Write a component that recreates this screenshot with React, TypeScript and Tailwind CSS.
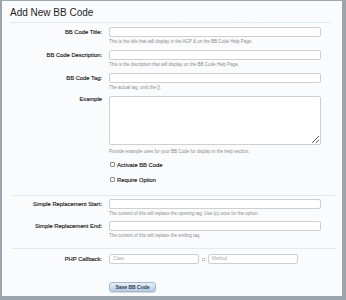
import React from 'react';

type RowProps = {
  label: string;
  hint?: string;
  labelClass?: string;
  children: React.ReactNode;
  className?: string;
};

function Row({ label, hint, labelClass, children, className }: RowProps) {
  return (
    <div className={`flex items-start ${className ?? ''}`}>
      <label
        className={`w-[100px] shrink-0 text-right text-[5.8px] text-[#1a1a1a] [-webkit-text-stroke:0.15px_#1a1a1a] ${
          labelClass ?? 'h-[10px] leading-[10px]'
        }`}
      >
        {label}
      </label>
      <div className="ml-[7px] flex w-[212px] flex-col">
        {children}
        {hint && (
          <p className="mt-[2px] whitespace-nowrap text-[4.5px] leading-[6px] text-[#8c8c8c]">{hint}</p>
        )}
      </div>
    </div>
  );
}

function TextInput({ placeholder, className }: { placeholder?: string; className?: string }) {
  return (
    <input
      type="text"
      placeholder={placeholder}
      className={`h-[10px] rounded-[2px] border border-[#cfcfcf] bg-white px-[3px] text-[4.5px] text-[#333] outline-none placeholder:text-[#a8a8a8] ${
        className ?? 'w-full'
      }`}
    />
  );
}

function Check({ label, className }: { label: string; className?: string }) {
  return (
    <div className={`flex h-[8px] items-center ${className ?? ''}`}>
      <span className="ml-[1px] h-[5px] w-[5px] rounded-[1px] border border-[#8a8a8a] bg-white" />
      <span className="ml-[2px] text-[5.8px] leading-[8px] text-[#1a1a1a] [-webkit-text-stroke:0.15px_#1a1a1a]">
        {label}
      </span>
    </div>
  );
}

export default function App() {
  return (
    <div className="h-[300px] w-[346px] bg-[#9aa5ae] pb-[4px] pl-[2px] pr-[4px] pt-[1px] font-['Liberation_Sans',Arial,sans-serif]">
      <div className="flex h-full flex-col bg-[#fafbfc]">
        <h1 className="ml-[8px] mt-[6px] h-[12px] text-[10px] leading-[12px] text-[#1e1e1e]">Add New BB Code</h1>
        <div className="ml-[8px] mt-[3px] h-px w-[320px] bg-gradient-to-r from-[#e4e7ea] via-[#e6eaee] to-[#d3eef0]" />

        <Row
          className="mt-[4px]"
          label="BB Code Title:"
          hint="This is the title that will display in the ACP & on the BB Code Help Page."
        >
          <TextInput />
        </Row>
        <Row
          className="mt-[5px]"
          label="BB Code Description:"
          hint="This is the discription that will display on the BB Code Help Page."
        >
          <TextInput />
        </Row>
        <Row className="mt-[5px]" label="BB Code Tag:" hint="The actual tag, omit the [].">
          <TextInput />
        </Row>
        <Row className="mt-[5px]" label="Example" labelClass="h-[6px] leading-[6px]">
          <textarea className="h-[49px] w-full rounded-[2px] border border-[#cfcfcf] bg-white outline-none" />
          <p className="mt-[4px] whitespace-nowrap text-[4.5px] leading-[6px] text-[#8c8c8c]">
            Provide example uses for your BB Code for display in the help section.
          </p>
          <Check className="mt-[6px]" label="Activate BB Code" />
          <Check className="mt-[7px]" label="Require Option" />
        </Row>

        <div className="ml-[10px] mt-[11px] h-px w-[324px] bg-[#e3e8ec]" />

        <Row
          className="mt-[4px]"
          label="Simple Replacement Start:"
          hint="The content of this will replace the opening tag. Use {o} once for the option."
        >
          <TextInput />
        </Row>
        <Row
          className="mt-[4px]"
          label="Simple Replacement End:"
          hint="The content of this will replace the ending tag."
        >
          <TextInput />
        </Row>

        <div className="ml-[10px] mt-[9px] h-px w-[324px] bg-[#e3e8ec]" />

        <Row className="mt-[5px]" label="PHP Callback:">
          <div className="flex items-center">
            <TextInput className="w-[90px]" placeholder="Class" />
            <span className="w-[9px] text-center text-[5.4px] font-bold leading-[10px] text-[#555]">::</span>
            <TextInput className="w-[90px]" placeholder="Method" />
          </div>
        </Row>

        <div className="ml-[10px] mt-[5px] h-px w-[324px] bg-gradient-to-r from-[#e3e8ec] via-[#d9eef2] to-[#e3e8ec]" />

        <div className="ml-[107px] mt-[3px]">
          <button className="h-[10px] w-[47px] rounded-[3px] border border-[#a3b9cf] bg-gradient-to-b from-[#e8f0f8] to-[#b6cce2] text-[5px] font-bold leading-[8px] text-[#2b3c4e] shadow-[0_1px_1px_rgba(0,0,0,0.15)]">
            Save BB Code
          </button>
        </div>
      </div>
    </div>
  );
}
